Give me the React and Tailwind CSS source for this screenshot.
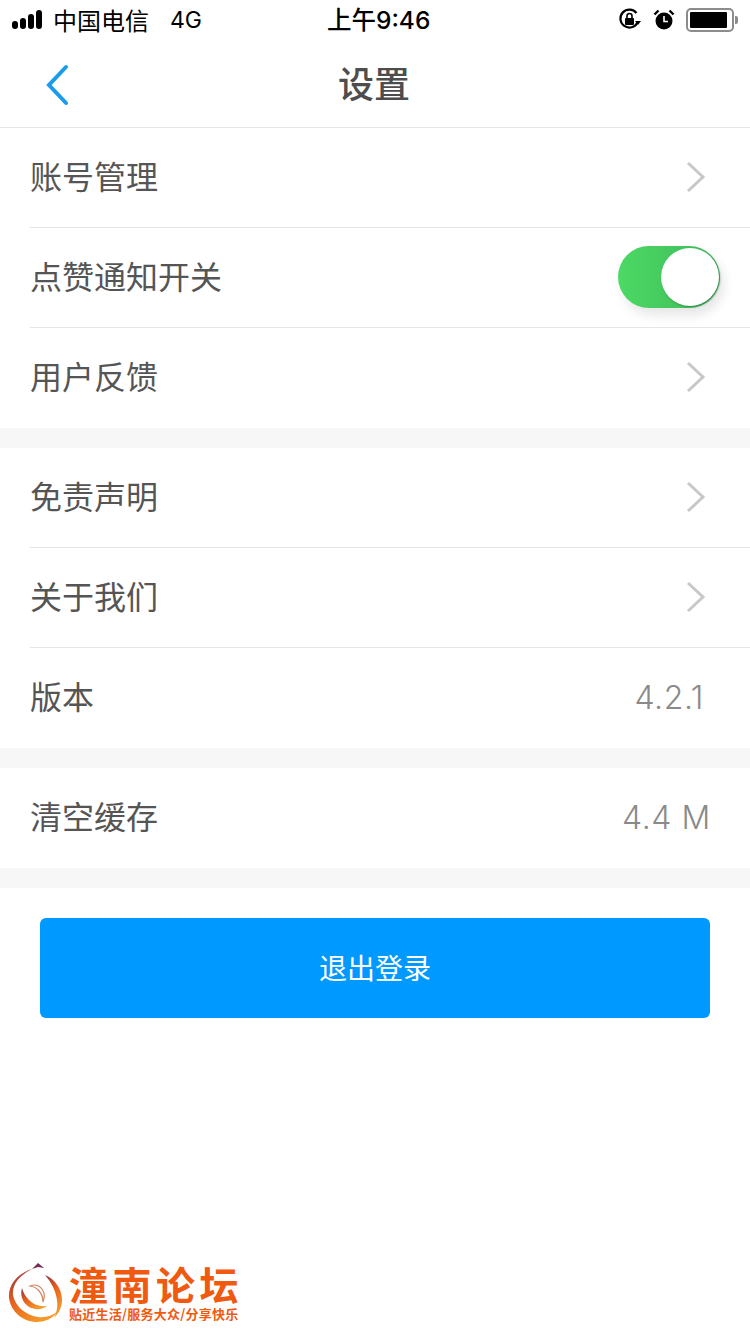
const FONT = "font-['Inter','Noto_Sans_CJK_SC',sans-serif]";

function Signal() {
  return (
    <div className="flex items-end gap-[2px] w-[34px] h-[18px]">
      <div className="w-[6px] h-[8px] rounded-full bg-black" />
      <div className="w-[6px] h-[11px] rounded-[3px] bg-black" />
      <div className="w-[6px] h-[15px] rounded-[3px] bg-black" />
      <div className="w-[6px] h-[19px] rounded-[3px] bg-black" />
    </div>
  );
}

function StatusBar() {
  return (
    <div className="relative h-[40px] flex items-center justify-between pl-[12px] pr-[12px] text-black">
      <div className="flex items-center">
        <Signal />
        <span className="ml-[7px] text-[24px] leading-[40px] font-['Noto_Sans_CJK_SC',sans-serif]">中国电信</span>
        <span className="ml-[21px] text-[23px] leading-[40px] font-['Inter',sans-serif]">4G</span>
      </div>
      <span className="absolute left-[327px] top-0 text-[24.5px] leading-[40px] font-medium font-['Inter','Noto_Sans_CJK_SC',sans-serif]">上午9:46</span>
      <div className="flex items-center">
        <svg width="24" height="24" viewBox="0 0 24 24" className="mr-[11px]">
          <path d="M19.5 14.5A9 9 0 1 1 18.5 5" fill="none" stroke="#000" strokeWidth="2.2" />
          <path d="M17 13h6l-3 4z" fill="#000" />
          <rect x="7" y="10" width="9" height="7" rx="1" fill="#000" />
          <path d="M9 10V8a2.5 2.5 0 0 1 5 0v2" fill="none" stroke="#000" strokeWidth="1.6" />
        </svg>
        <svg width="22" height="22" viewBox="0 0 22 22" className="mr-[11px]">
          <circle cx="11" cy="12" r="8.5" fill="#000" />
          <path d="M11 7v5.5h4" fill="none" stroke="#fff" strokeWidth="1.6" />
          <path d="M1.5 5.5 5.5 1.5M20.5 5.5 16.5 1.5" stroke="#000" strokeWidth="2.4" />
        </svg>
        <div className="w-[48px] h-[24px] border-[2px] border-[#8c8c8c] rounded-[5px] p-[2px]">
          <div className="w-[37px] h-full bg-black rounded-[1px]" />
        </div>
        <div className="w-[3px] h-[8px] bg-[#8c8c8c] rounded-r-[2px] ml-[1px]" />
      </div>
    </div>
  );
}

function Switch() {
  return (
    <div className="relative w-[102px] h-[62px] mb-[2px] rounded-full bg-gradient-to-r from-[#4cd964] to-[#3fb95a] shadow-[4px_7px_12px_rgba(0,0,0,0.1)]">
      <div className="absolute right-[1px] top-[2px] w-[58px] h-[58px] rounded-full bg-white shadow-[1px_1px_2px_rgba(40,110,60,0.7)]" />
    </div>
  );
}

function Row({ label, right, last }) {
  return (
    <div className="h-[100px] pl-[30px]">
      <div className={`h-full flex items-center justify-between ${last ? '' : 'border-b border-[#e5e5e5]'}`}>
        <span className="text-[32px] leading-none text-[#555555]">{label}</span>
        {right}
      </div>
    </div>
  );
}

const chevron = (
  <svg width="20" height="32" viewBox="0 0 20 32" className="mr-[44px] mb-[2px]">
    <path d="M2 2l15 14L2 30" fill="none" stroke="#c8c8c8" strokeWidth="3" />
  </svg>
);

function Value({ text, mr }) {
  return <span className={`text-[32px] leading-none font-light tracking-[0.6px] text-[#8a8a8a] font-['Inter',sans-serif] ${mr}`}>{text}</span>;
}

function Gap() {
  return <div className="h-[20px] bg-[#f7f7f7]" />;
}

function Logo() {
  return (
    <div className="flex items-center pl-[8px] h-[70px]">
      <svg width="56" height="62" viewBox="0 0 56 62" className="shrink-0">
        <defs>
          <linearGradient id="ph" x1="0" y1="0" x2="0.6" y2="1">
            <stop offset="0" stopColor="#8a2f4a" />
            <stop offset="0.5" stopColor="#e8601c" />
            <stop offset="1" stopColor="#f49a2a" />
          </linearGradient>
        </defs>
        <path d="M24 7C8 12 0 24 1 36c2 14 14 24 28 24 9 0 16-4 21-11-6 5-13 7-20 6C17 53 7 44 5 33 4 22 12 13 24 7z" fill="url(#ph)" />
        <path d="M37 13c10 4 17 14 17 25 0 7-3 13-8 18 3-6 4-12 3-18-1-9-6-18-12-25z" fill="url(#ph)" />
        <path d="M14 26c-2 7 0 14 7 19 6 3 13 3 18-1-7 1-13-1-18-6-4-4-6-8-7-12z" fill="url(#ph)" />
        <path d="M22 24c7 1 13 7 13 16 4-10-3-20-13-16z" fill="none" stroke="#d4835f" strokeWidth="1.2" />
        <path d="M24 7l6-6 6 5-6-1z" fill="#7a2d55" />
      </svg>
      <div className="ml-[5px] -mt-[3px] flex flex-col gap-[4px] font-['Noto_Sans_CJK_SC',sans-serif] text-[#ef5a10]">
        <span className="text-[39px] leading-[40px] font-bold tracking-[4.5px] whitespace-nowrap">潼南论坛</span>
        <span className="text-[13px] leading-[14px] font-bold tracking-[0.25px] whitespace-nowrap">贴近生活/服务大众/分享快乐</span>
      </div>
    </div>
  );
}

export default function App() {
  return (
    <div className={`w-[750px] h-[1334px] bg-white flex flex-col overflow-hidden ${FONT}`}>
      <StatusBar />
      <div className="relative h-[88px] flex items-center justify-center border-b border-[#e5e5e5]">
        <svg width="26" height="42" viewBox="0 0 26 42" className="absolute left-[45px] top-[24px]">
          <path d="M21 3L4 21l17 18" fill="none" stroke="#1a9bec" strokeWidth="4" strokeLinecap="round" />
        </svg>
        <span className="text-[36px] leading-none font-medium text-[#4d4d4d] mt-[2px] -ml-[2px]">设置</span>
      </div>

      <Row label="账号管理" right={chevron} />
      <Row label="点赞通知开关" right={<div className="mr-[30px]"><Switch /></div>} />
      <Row label="用户反馈" right={chevron} last />
      <Gap />
      <Row label="免责声明" right={chevron} />
      <Row label="关于我们" right={chevron} />
      <Row label="版本" right={<Value text="4.2.1" mr="mr-[46px]" />} last />
      <Gap />
      <Row label="清空缓存" right={<Value text="4.4 M" mr="mr-[39px]" />} last />
      <Gap />

      <div className="px-[40px] pt-[30px]">
        <button className="w-full h-[100px] pt-[2px] rounded-[6px] bg-[#0099ff] text-white text-[28px]">退出登录</button>
      </div>

      <div className="mt-auto pb-[6px]">
        <Logo />
      </div>
    </div>
  );
}
